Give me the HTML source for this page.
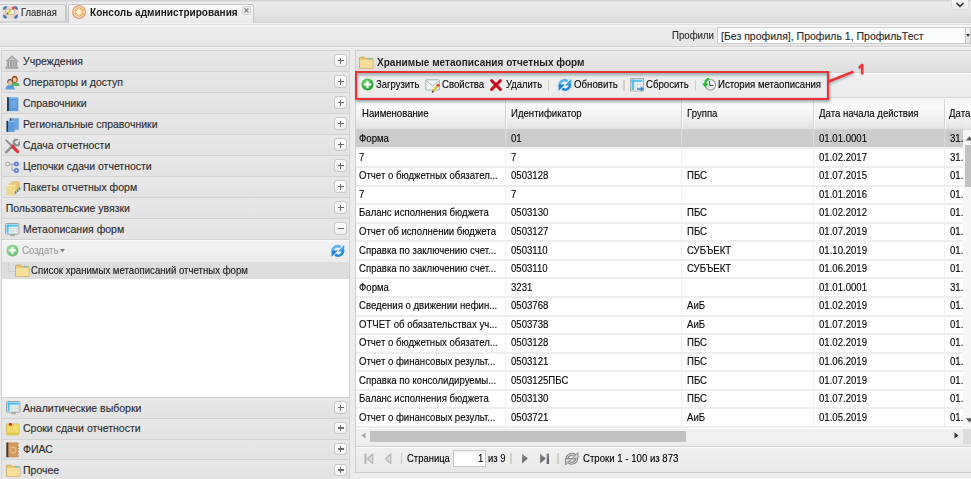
<!DOCTYPE html>
<html><head><meta charset="utf-8">
<style>
*{box-sizing:border-box}
html,body{margin:0;padding:0}
body{width:971px;height:479px;overflow:hidden;position:relative;background:#ececec;font-family:"Liberation Sans",sans-serif;color:#222}
.a{position:absolute}
.t{position:absolute;white-space:nowrap;line-height:1;transform-origin:0 0}
.s{-webkit-text-stroke:0.12px currentColor}
</style></head>
<body>
<div class="a" style="left:0px;top:0px;width:971px;height:2px;background:linear-gradient(#d2d2d2,#e2e2e2)"></div>
<div class="a" style="left:0px;top:2px;width:971px;height:20px;background:linear-gradient(#ededed,#e4e4e4 60%,#d9d9d9)"></div>
<div class="a" style="left:0px;top:22px;width:971px;height:1px;background:#d6d6d6"></div>
<div class="a" style="left:0px;top:23px;width:971px;height:1px;background:#f2f2f2"></div>
<div class="a" style="left:0px;top:24px;width:971px;height:1px;background:#dedede"></div>
<div class="a" style="left:0px;top:25px;width:971px;height:2px;background:#f5f5f5"></div>
<div class="a" style="left:-2px;top:4px;width:67.5px;height:18px;background:linear-gradient(#ececec,#e4e4e4);border:1px solid #c9c9c9;border-bottom:1px solid #d2d2d2;border-radius:3px 3px 0 0"></div>
<div class="a" style="left:66px;top:3px;width:1.2px;height:19px;background:#c8c8c8"></div>
<div class="a" style="left:68.3px;top:3.6px;width:185.7px;height:19.6px;background:linear-gradient(#fdfdfd,#f0f0f0 40%,#eaeaea);border:1px solid #c6c6c6;border-bottom:none;border-radius:3px 3px 0 0"></div>
<svg class="a" style="left:3px;top:6px" width="15" height="13" viewBox="0 0 15 13"><rect x="0.2" y="0.2" width="14.6" height="12.2" rx="2" fill="#f2d4c4"/><path d="M0.2 4 V2.2 Q0.2 0.2 2.2 0.2 H4 Q3.6 3.4 0.2 4 Z" fill="#3a78c4"/><path d="M14.8 4 V2.2 Q14.8 0.2 12.8 0.2 H11 Q11.4 3.4 14.8 4 Z" fill="#3a78c4"/><path d="M0.2 8.6 V10.4 Q0.2 12.4 2.2 12.4 H4 Q3.6 9.2 0.2 8.6 Z" fill="#3a78c4"/><path d="M14.8 8.6 V10.4 Q14.8 12.4 12.8 12.4 H11 Q11.4 9.2 14.8 8.6 Z" fill="#3a78c4"/><rect x="3" y="3.3" width="8.8" height="5.2" fill="#dff2f4" stroke="#b8a49a" stroke-width="0.7"/><path d="M4.4 7.6 L7.8 4.4" stroke="#e8d030" stroke-width="2.2"/><path d="M4 8.2 L4.8 7.2" stroke="#443" stroke-width="1.2"/><circle cx="10.2" cy="2" r="1.5" fill="#e85050"/></svg>
<div class="t s" style="left:21.2px;top:7.20px;font-size:10.5px;font-weight:400;color:#2a2a2a;transform:scaleX(0.895);">Главная</div>
<svg class="a" style="left:72.3px;top:5px" width="14" height="14" viewBox="0 0 14 14"><circle cx="7" cy="7" r="6.3" fill="#fff3e6" stroke="#e39a70" stroke-width="1.3"/><path d="M9.26 7.44 L11.88 7.45 A4.9 4.9 0 0 1 10.77 10.13 L8.91 8.28 Z" fill="#f7a848"/><path d="M8.28 8.91 L10.13 10.77 A4.9 4.9 0 0 1 7.45 11.88 L7.44 9.26 Z" fill="#f7a848"/><path d="M6.56 9.26 L6.55 11.88 A4.9 4.9 0 0 1 3.87 10.77 L5.72 8.91 Z" fill="#f7a848"/><path d="M5.09 8.28 L3.23 10.13 A4.9 4.9 0 0 1 2.12 7.45 L4.74 7.44 Z" fill="#f7a848"/><path d="M4.74 6.56 L2.12 6.55 A4.9 4.9 0 0 1 3.23 3.87 L5.09 5.72 Z" fill="#f7a848"/><path d="M5.72 5.09 L3.87 3.23 A4.9 4.9 0 0 1 6.55 2.12 L6.56 4.74 Z" fill="#f7a848"/><path d="M7.44 4.74 L7.45 2.12 A4.9 4.9 0 0 1 10.13 3.23 L8.28 5.09 Z" fill="#f7a848"/><path d="M8.91 5.72 L10.77 3.87 A4.9 4.9 0 0 1 11.88 6.55 L9.26 6.56 Z" fill="#f7a848"/></svg>
<div class="t " style="left:89.8px;top:7.00px;font-size:10.5px;font-weight:700;color:#1a1a1a;transform:scaleX(0.956);">Консоль администрирования</div>
<div class="a" style="left:242px;top:6px;width:9px;height:9px;background:#efefef;border:1px solid #d4d4d4;border-radius:2px"></div>
<svg class="a" style="left:242px;top:6px" width="9" height="9"><path d="M2.5 2.5 L6.5 6.5 M6.5 2.5 L2.5 6.5" stroke="#8a8a8a" stroke-width="1.4"/></svg>
<div class="a" style="left:951px;top:-3px;width:18px;height:13px;background:linear-gradient(#f6f6f6,#ececec);border:1px solid #dcdcdc;border-radius:3px"></div>
<svg class="a" style="left:955px;top:2px" width="10" height="6"><path d="M1.5 1 L5 4.3 L8.5 1" fill="none" stroke="#333" stroke-width="1.6"/></svg>
<div class="a" style="left:0px;top:27px;width:971px;height:19px;background:linear-gradient(#eaeaea,#e7e7e7)"></div>
<div class="a" style="left:0px;top:46px;width:971px;height:1px;background:#d0d0d0"></div>
<div class="a" style="left:0px;top:47px;width:971px;height:1px;background:#f4f4f4"></div>
<div class="a" style="left:0px;top:48px;width:971px;height:431px;background:#ececec"></div>
<div class="t s" style="left:671.9px;top:30.00px;font-size:10.5px;font-weight:400;color:#2a2a2a;transform:scaleX(0.917);">Профили</div>
<div class="a" style="left:717px;top:27px;width:249px;height:17px;background:linear-gradient(#f7f9fa,#ffffff);border:1px solid #cdcdcd"></div>
<div class="t s" style="left:721px;top:31.00px;font-size:10.5px;font-weight:400;color:#2a2a2a;">[Без профиля], Профиль 1, ПрофильТест</div>
<div class="a" style="left:965px;top:27px;width:6px;height:17px;background:linear-gradient(#f4f4f4,#e2e2e2);border:1px solid #c8c8c8"></div>
<svg class="a" style="left:966px;top:33px" width="5" height="5"><path d="M0 1 L4 1 L2 4 Z" fill="#333"/></svg>
<div class="a" style="left:1px;top:50px;width:349px;height:429px;background:#fff;border-left:1px solid #d4d4d4;border-right:1px solid #d4d4d4"></div>
<div class="a" style="left:1px;top:50px;width:349px;height:21px;background:linear-gradient(#e8e8e8,#e3e3e3);border-top:1px solid #d3d3d3;border-left:1px solid #d4d4d4;border-right:1px solid #d4d4d4"></div>
<svg class="a" style="left:5px;top:55px" width="15" height="15" viewBox="0 0 15 15"><path d="M7 0.2 L13.4 6 H0.6 Z" fill="#a4a4a4"/><path d="M7 2.2 L10.6 5 H3.4 Z" fill="#c4c4c4"/><rect x="0.8" y="5.8" width="12.4" height="1.2" fill="#b0b0b0"/><rect x="1.6" y="7" width="10.8" height="4.6" fill="#cfcfcf"/><rect x="2.2" y="7" width="1.8" height="4.6" fill="#9c9c9c"/><rect x="5" y="7" width="1.8" height="4.6" fill="#9c9c9c"/><rect x="7.6" y="7" width="1.8" height="4.6" fill="#9c9c9c"/><rect x="10.2" y="7" width="1.8" height="4.6" fill="#9c9c9c"/><rect x="0.6" y="11.4" width="12.8" height="2.4" rx="0.6" fill="#a0a0a0"/></svg>
<div class="t s" style="left:23px;top:56.00px;font-size:10.5px;font-weight:400;color:#2a2a2a;">Учреждения</div>
<div class="a" style="left:334.3px;top:54.2px;width:12.5px;height:12.5px;background:linear-gradient(#fdfdfd,#f0f0f0);border:1px solid #c8c8c8;border-radius:3px"></div>
<div class="a" style="left:337.6px;top:59.5px;width:6px;height:1.9px;background:#6a6a6a"></div>
<div class="a" style="left:339.6px;top:57.5px;width:1.9px;height:6px;background:#6a6a6a"></div>
<div class="a" style="left:1px;top:71px;width:349px;height:21px;background:linear-gradient(#e8e8e8,#e3e3e3);border-top:1px solid #d3d3d3;border-left:1px solid #d4d4d4;border-right:1px solid #d4d4d4"></div>
<svg class="a" style="left:4.5px;top:74.5px" width="16" height="15" viewBox="0 0 16 15"><path d="M6.5 11 Q6.5 7.6 10.6 7.6 Q14.6 7.6 14.6 11 Z" fill="#52b868"/><ellipse cx="9.7" cy="4.3" rx="3" ry="3.6" fill="#a84a22"/><ellipse cx="9.7" cy="4.8" rx="1.9" ry="2.4" fill="#f4c898"/><path d="M0.5 14.6 Q0.5 10 5 10 Q9.6 10 9.6 14.6 Z" fill="#5a9ad8"/><circle cx="5.1" cy="6.8" r="2.8" fill="#5a4a40"/><ellipse cx="5.1" cy="7.6" rx="2" ry="2.3" fill="#f2c896"/></svg>
<div class="t s" style="left:23px;top:77.00px;font-size:10.5px;font-weight:400;color:#2a2a2a;">Операторы и доступ</div>
<div class="a" style="left:334.3px;top:75.2px;width:12.5px;height:12.5px;background:linear-gradient(#fdfdfd,#f0f0f0);border:1px solid #c8c8c8;border-radius:3px"></div>
<div class="a" style="left:337.6px;top:80.5px;width:6px;height:1.9px;background:#6a6a6a"></div>
<div class="a" style="left:339.6px;top:78.5px;width:1.9px;height:6px;background:#6a6a6a"></div>
<div class="a" style="left:1px;top:92px;width:349px;height:21px;background:linear-gradient(#e8e8e8,#e3e3e3);border-top:1px solid #d3d3d3;border-left:1px solid #d4d4d4;border-right:1px solid #d4d4d4"></div>
<svg class="a" style="left:7px;top:96.5px" width="12" height="15" viewBox="0 0 12 15"><rect x="0.3" y="0.3" width="11" height="13.8" fill="#5a98dc"/><rect x="0" y="0.3" width="1.9" height="13.8" fill="#2a3a4a"/><rect x="3.4" y="3.2" width="6.4" height="7.6" fill="#6aa6e4"/><rect x="1.9" y="0.3" width="9.4" height="1.2" fill="#8cc0ec"/></svg>
<div class="t s" style="left:23px;top:98.00px;font-size:10.5px;font-weight:400;color:#2a2a2a;">Справочники</div>
<div class="a" style="left:334.3px;top:96.2px;width:12.5px;height:12.5px;background:linear-gradient(#fdfdfd,#f0f0f0);border:1px solid #c8c8c8;border-radius:3px"></div>
<div class="a" style="left:337.6px;top:101.5px;width:6px;height:1.9px;background:#6a6a6a"></div>
<div class="a" style="left:339.6px;top:99.5px;width:1.9px;height:6px;background:#6a6a6a"></div>
<div class="a" style="left:1px;top:113px;width:349px;height:21px;background:linear-gradient(#e8e8e8,#e3e3e3);border-top:1px solid #d3d3d3;border-left:1px solid #d4d4d4;border-right:1px solid #d4d4d4"></div>
<svg class="a" style="left:6px;top:117.8px" width="14" height="15" viewBox="0 0 14 15"><rect x="4.2" y="0.2" width="8.6" height="11.6" fill="#6aa6e4"/><rect x="3.7" y="0.2" width="1.6" height="11.6" fill="#34485c"/><rect x="1.3" y="2.9" width="7.2" height="11" fill="#5a9ade"/><rect x="0.4" y="2.9" width="1.7" height="11" fill="#2a3a4a"/><rect x="2" y="2.9" width="6.5" height="1.2" fill="#8cc0ec"/></svg>
<div class="t s" style="left:23px;top:119.00px;font-size:10.5px;font-weight:400;color:#2a2a2a;">Региональные справочники</div>
<div class="a" style="left:334.3px;top:117.2px;width:12.5px;height:12.5px;background:linear-gradient(#fdfdfd,#f0f0f0);border:1px solid #c8c8c8;border-radius:3px"></div>
<div class="a" style="left:337.6px;top:122.5px;width:6px;height:1.9px;background:#6a6a6a"></div>
<div class="a" style="left:339.6px;top:120.5px;width:1.9px;height:6px;background:#6a6a6a"></div>
<div class="a" style="left:1px;top:134px;width:349px;height:21px;background:linear-gradient(#e8e8e8,#e3e3e3);border-top:1px solid #d3d3d3;border-left:1px solid #d4d4d4;border-right:1px solid #d4d4d4"></div>
<svg class="a" style="left:4.5px;top:138.5px" width="15" height="15" viewBox="0 0 15 15"><path d="M1.2 13.3 L9.6 4.9" stroke="#8e8e8e" stroke-width="2.4" stroke-linecap="round"/><circle cx="11.6" cy="3.6" r="2.9" fill="none" stroke="#8e8e8e" stroke-width="2.2"/><path d="M11.6 3.6 L14.5 0.7" stroke="#ececec" stroke-width="2"/><path d="M1.2 1.3 L7 7" stroke="#8e8e8e" stroke-width="1.8" stroke-linecap="round"/><path d="M7.6 7.6 L12.6 12.6" stroke="#e2343c" stroke-width="3.2" stroke-linecap="round"/></svg>
<div class="t s" style="left:23px;top:140.00px;font-size:10.5px;font-weight:400;color:#2a2a2a;">Сдача отчетности</div>
<div class="a" style="left:334.3px;top:138.2px;width:12.5px;height:12.5px;background:linear-gradient(#fdfdfd,#f0f0f0);border:1px solid #c8c8c8;border-radius:3px"></div>
<div class="a" style="left:337.6px;top:143.5px;width:6px;height:1.9px;background:#6a6a6a"></div>
<div class="a" style="left:339.6px;top:141.5px;width:1.9px;height:6px;background:#6a6a6a"></div>
<div class="a" style="left:1px;top:155px;width:349px;height:21px;background:linear-gradient(#e8e8e8,#e3e3e3);border-top:1px solid #d3d3d3;border-left:1px solid #d4d4d4;border-right:1px solid #d4d4d4"></div>
<svg class="a" style="left:5px;top:160px" width="15" height="15" viewBox="0 0 15 15"><path d="M4.6 4.1 H9.6 M7 4.1 V10.4 H9.6" fill="none" stroke="#a8a8a8" stroke-width="1.1"/><circle cx="2.6" cy="4.1" r="1.9" fill="#f4f4f4" stroke="#a0a0a0" stroke-width="1.1"/><circle cx="11.4" cy="4.1" r="2.5" fill="#5a7ee0"/><circle cx="11.4" cy="10.4" r="2.5" fill="#5a7ee0"/><circle cx="11.4" cy="4.1" r="0.8" fill="#dfe8ff"/><circle cx="11.4" cy="10.4" r="0.8" fill="#dfe8ff"/></svg>
<div class="t s" style="left:23px;top:161.00px;font-size:10.5px;font-weight:400;color:#2a2a2a;">Цепочки сдачи отчетности</div>
<div class="a" style="left:334.3px;top:159.2px;width:12.5px;height:12.5px;background:linear-gradient(#fdfdfd,#f0f0f0);border:1px solid #c8c8c8;border-radius:3px"></div>
<div class="a" style="left:337.6px;top:164.5px;width:6px;height:1.9px;background:#6a6a6a"></div>
<div class="a" style="left:339.6px;top:162.5px;width:1.9px;height:6px;background:#6a6a6a"></div>
<div class="a" style="left:1px;top:176px;width:349px;height:21px;background:linear-gradient(#e8e8e8,#e3e3e3);border-top:1px solid #d3d3d3;border-left:1px solid #d4d4d4;border-right:1px solid #d4d4d4"></div>
<svg class="a" style="left:5.5px;top:181px" width="15" height="15" viewBox="0 0 15 15"><rect x="5" y="0.3" width="8.6" height="9.6" rx="0.8" fill="#e4c46c"/><rect x="2.8" y="2.2" width="8.6" height="10" rx="0.8" fill="#eccc76"/><rect x="0.6" y="4.2" width="8.6" height="10" rx="0.8" fill="#f2d88c"/><rect x="0.6" y="4.2" width="8.6" height="1.2" fill="#f8e6ac"/><ellipse cx="9.6" cy="11.6" rx="0.9" ry="1.5" fill="#2aa0a8"/><ellipse cx="11.7" cy="9.6" rx="0.9" ry="1.5" fill="#2aa0a8"/><ellipse cx="13.6" cy="7.6" rx="0.9" ry="1.5" fill="#2aa0a8"/></svg>
<div class="t s" style="left:23px;top:182.00px;font-size:10.5px;font-weight:400;color:#2a2a2a;">Пакеты отчетных форм</div>
<div class="a" style="left:334.3px;top:180.2px;width:12.5px;height:12.5px;background:linear-gradient(#fdfdfd,#f0f0f0);border:1px solid #c8c8c8;border-radius:3px"></div>
<div class="a" style="left:337.6px;top:185.5px;width:6px;height:1.9px;background:#6a6a6a"></div>
<div class="a" style="left:339.6px;top:183.5px;width:1.9px;height:6px;background:#6a6a6a"></div>
<div class="a" style="left:1px;top:197px;width:349px;height:21px;background:linear-gradient(#e8e8e8,#e3e3e3);border-top:1px solid #d3d3d3;border-left:1px solid #d4d4d4;border-right:1px solid #d4d4d4"></div>
<div class="t s" style="left:5.7px;top:203.00px;font-size:10.5px;font-weight:400;color:#2a2a2a;">Пользовательские увязки</div>
<div class="a" style="left:334.3px;top:201.2px;width:12.5px;height:12.5px;background:linear-gradient(#fdfdfd,#f0f0f0);border:1px solid #c8c8c8;border-radius:3px"></div>
<div class="a" style="left:337.6px;top:206.5px;width:6px;height:1.9px;background:#6a6a6a"></div>
<div class="a" style="left:339.6px;top:204.5px;width:1.9px;height:6px;background:#6a6a6a"></div>
<div class="a" style="left:1px;top:218px;width:349px;height:21px;background:linear-gradient(#e8e8e8,#e3e3e3);border-top:1px solid #d3d3d3;border-left:1px solid #d4d4d4;border-right:1px solid #d4d4d4"></div>
<svg class="a" style="left:5px;top:222.5px" width="15" height="14" viewBox="0 0 15 14"><rect x="0.5" y="0.5" width="13.4" height="10.6" rx="0.8" fill="#eef4f4" stroke="#98a4a4" stroke-width="1"/><path d="M6 3.6 V10.4 M9 3.6 V10.4 M12 3.6 V10.4 M3.4 5.6 H13.4 M3.4 7.8 H13.4" stroke="#cdd6d6" stroke-width="0.7"/><rect x="1.6" y="1.6" width="11.4" height="2" fill="#44c0f8"/><rect x="1.6" y="1.6" width="2" height="8.6" fill="#44c0f8"/><rect x="5" y="11" width="5" height="2.2" fill="#a4acac"/></svg>
<div class="t s" style="left:23px;top:224.00px;font-size:10.5px;font-weight:400;color:#2a2a2a;">Метаописания форм</div>
<div class="a" style="left:334.3px;top:222.2px;width:12.5px;height:12.5px;background:linear-gradient(#fdfdfd,#f0f0f0);border:1px solid #c8c8c8;border-radius:3px"></div>
<div class="a" style="left:337.6px;top:227.5px;width:6px;height:1.9px;background:#6a6a6a"></div>
<div class="a" style="left:1px;top:397px;width:349px;height:21px;background:linear-gradient(#e8e8e8,#e3e3e3);border-top:1px solid #d3d3d3;border-left:1px solid #d4d4d4;border-right:1px solid #d4d4d4"></div>
<svg class="a" style="left:5.5px;top:401.3px" width="15" height="14" viewBox="0 0 15 14"><rect x="0.5" y="0.5" width="13.4" height="10.6" rx="0.8" fill="#eef4f4" stroke="#98a4a4" stroke-width="1"/><path d="M6 3.6 V10.4 M9 3.6 V10.4 M12 3.6 V10.4 M3.4 5.6 H13.4 M3.4 7.8 H13.4" stroke="#cdd6d6" stroke-width="0.7"/><rect x="1.6" y="1.6" width="11.4" height="2" fill="#44c0f8"/><rect x="1.6" y="1.6" width="2" height="8.6" fill="#44c0f8"/><rect x="5" y="11" width="5" height="2.2" fill="#a4acac"/></svg>
<div class="t s" style="left:23px;top:402.50px;font-size:10.5px;font-weight:400;color:#2a2a2a;">Аналитические выборки</div>
<div class="a" style="left:334.3px;top:401.2px;width:12.5px;height:12.5px;background:linear-gradient(#fdfdfd,#f0f0f0);border:1px solid #c8c8c8;border-radius:3px"></div>
<div class="a" style="left:337.6px;top:406.5px;width:6px;height:1.9px;background:#6a6a6a"></div>
<div class="a" style="left:339.6px;top:404.5px;width:1.9px;height:6px;background:#6a6a6a"></div>
<div class="a" style="left:1px;top:417.6px;width:349px;height:21px;background:linear-gradient(#e8e8e8,#e3e3e3);border-top:1px solid #d3d3d3;border-left:1px solid #d4d4d4;border-right:1px solid #d4d4d4"></div>
<svg class="a" style="left:6px;top:423px" width="14" height="13" viewBox="0 0 14 13"><rect x="0.5" y="1" width="12.6" height="11" rx="0.8" fill="#f0dc6c" stroke="#d0ba48" stroke-width="0.8"/><rect x="1" y="9.6" width="11.6" height="2" fill="#dcc452"/><path d="M4.4 1.2 L6.6 3.4" stroke="#888" stroke-width="0.8"/><circle cx="4.4" cy="1.3" r="1.5" fill="#e41c2c"/></svg>
<div class="t s" style="left:23px;top:423.10px;font-size:10.5px;font-weight:400;color:#2a2a2a;">Сроки сдачи отчетности</div>
<div class="a" style="left:334.3px;top:421.8px;width:12.5px;height:12.5px;background:linear-gradient(#fdfdfd,#f0f0f0);border:1px solid #c8c8c8;border-radius:3px"></div>
<div class="a" style="left:337.6px;top:427.1px;width:6px;height:1.9px;background:#6a6a6a"></div>
<div class="a" style="left:339.6px;top:425.1px;width:1.9px;height:6px;background:#6a6a6a"></div>
<div class="a" style="left:1px;top:438.7px;width:349px;height:21px;background:linear-gradient(#e8e8e8,#e3e3e3);border-top:1px solid #d3d3d3;border-left:1px solid #d4d4d4;border-right:1px solid #d4d4d4"></div>
<svg class="a" style="left:5.6px;top:442px" width="14" height="16" viewBox="0 0 14 16"><rect x="0.4" y="0.6" width="12.4" height="14.6" rx="1" fill="#c88a50"/><rect x="0.4" y="0.6" width="2" height="14.6" fill="#3a3a3a"/><rect x="2.6" y="1.6" width="9" height="12.6" fill="#d49a60"/><circle cx="7" cy="8" r="2.8" fill="none" stroke="#e8bc88" stroke-width="1.2"/><circle cx="12.6" cy="3.5" r="0.7" fill="#eee"/><circle cx="12.6" cy="6.5" r="0.7" fill="#eee"/><circle cx="12.6" cy="9.5" r="0.7" fill="#eee"/><circle cx="12.6" cy="12.5" r="0.7" fill="#eee"/></svg>
<div class="t s" style="left:23px;top:444.20px;font-size:10.5px;font-weight:400;color:#2a2a2a;">ФИАС</div>
<div class="a" style="left:334.3px;top:442.9px;width:12.5px;height:12.5px;background:linear-gradient(#fdfdfd,#f0f0f0);border:1px solid #c8c8c8;border-radius:3px"></div>
<div class="a" style="left:337.6px;top:448.2px;width:6px;height:1.9px;background:#6a6a6a"></div>
<div class="a" style="left:339.6px;top:446.2px;width:1.9px;height:6px;background:#6a6a6a"></div>
<div class="a" style="left:1px;top:459.4px;width:349px;height:21px;background:linear-gradient(#e8e8e8,#e3e3e3);border-top:1px solid #d3d3d3;border-left:1px solid #d4d4d4;border-right:1px solid #d4d4d4"></div>
<svg class="a" style="left:5.5px;top:464px" width="15" height="13" viewBox="0 0 15 13"><path d="M0.5 2 Q0.5 1.1 1.4 1.1 H5 L6.4 2.4 H13.2 Q14 2.4 14 3.2 V12.2 H0.5 Z" fill="#e8c676" stroke="#caa452" stroke-width="0.8"/><rect x="0.9" y="4" width="12.8" height="8" fill="#f6de9c"/><rect x="9.4" y="2" width="3.6" height="1.6" fill="#6ccccc"/></svg>
<div class="t s" style="left:23px;top:464.90px;font-size:10.5px;font-weight:400;color:#2a2a2a;">Прочее</div>
<div class="a" style="left:334.3px;top:463.59999999999997px;width:12.5px;height:12.5px;background:linear-gradient(#fdfdfd,#f0f0f0);border:1px solid #c8c8c8;border-radius:3px"></div>
<div class="a" style="left:337.6px;top:468.9px;width:6px;height:1.9px;background:#6a6a6a"></div>
<div class="a" style="left:339.6px;top:466.9px;width:1.9px;height:6px;background:#6a6a6a"></div>
<div class="a" style="left:2px;top:239px;width:347px;height:23px;background:linear-gradient(#f3f3f3,#ececec);border-top:1px solid #d4d4d4"></div>
<div class="a" style="left:2px;top:240px;width:347px;height:1px;background:#fafafa"></div>
<div class="a" style="left:0;top:0;opacity:0.62">
<svg class="a" style="left:6.2px;top:243.8px" width="13" height="13" viewBox="0 0 13 13"><defs><radialGradient id="gA" cx="40%" cy="35%" r="70%"><stop offset="0" stop-color="#6fe06f"/><stop offset="1" stop-color="#139a1f"/></radialGradient></defs><circle cx="6.5" cy="6.5" r="6" fill="url(#gA)"/><rect x="2.8" y="5.4" width="7.4" height="2.2" fill="#fff"/><rect x="5.4" y="2.8" width="2.2" height="7.4" fill="#fff"/></svg>
</div>
<div class="t s" style="left:21.6px;top:245.00px;font-size:10.5px;font-weight:400;color:#9a9a9a;transform:scaleX(0.912);">Создать</div>
<svg class="a" style="left:60px;top:249px" width="6" height="4"><path d="M0 0 L5 0 L2.5 3 Z" fill="#777"/></svg>
<svg class="a" style="left:331px;top:244px" width="14" height="14" viewBox="0 0 14 14"><path d="M1.6 7.6 A5 5 0 0 1 9.6 3.2" fill="none" stroke="#58b4f0" stroke-width="2.5"/><path d="M13.2 1 V7.4 H6.8 Z" fill="#3aa0ec"/><path d="M12 6.2 A5 5 0 0 1 4 10.6" fill="none" stroke="#2088e2" stroke-width="2.5"/><path d="M0.6 12.8 V6.6 H6.8 Z" fill="#1a7edc"/></svg>
<div class="a" style="left:2px;top:262px;width:347px;height:17px;background:#dddddd"></div>
<svg class="a" style="left:8px;top:262px" width="10" height="12"><path d="M0.5 0 V9.5 H8" fill="none" stroke="#cfcfcf" stroke-width="1"/></svg>
<svg class="a" style="left:15.2px;top:264.2px" width="15" height="13" viewBox="0 0 15 13"><path d="M0.5 2 Q0.5 1.1 1.4 1.1 H5 L6.4 2.4 H13.2 Q14 2.4 14 3.2 V12.2 H0.5 Z" fill="#e8c676" stroke="#caa452" stroke-width="0.8"/><rect x="0.9" y="4" width="12.8" height="8" fill="#f6de9c"/><rect x="9.4" y="2" width="3.6" height="1.6" fill="#6ccccc"/></svg>
<div class="t s" style="left:30.9px;top:265.00px;font-size:10.5px;font-weight:400;color:#1a1a1a;transform:scaleX(0.916);">Список хранимых метаописаний отчетных форм</div>
<div class="a" style="left:355px;top:50px;width:616px;height:423px;background:#fff;border:1px solid #cdcdcd;border-right:none"></div>
<div class="a" style="left:356px;top:51px;width:615px;height:21px;background:linear-gradient(#ececec,#dedede)"></div>
<svg class="a" style="left:359px;top:56px" width="15" height="13" viewBox="0 0 15 13"><path d="M0.5 2 Q0.5 1.1 1.4 1.1 H5 L6.4 2.4 H13.2 Q14 2.4 14 3.2 V12.2 H0.5 Z" fill="#e8c676" stroke="#caa452" stroke-width="0.8"/><rect x="0.9" y="4" width="12.8" height="8" fill="#f6de9c"/><rect x="9.4" y="2" width="3.6" height="1.6" fill="#6ccccc"/></svg>
<div class="t " style="left:377.4px;top:57.00px;font-size:10.5px;font-weight:700;color:#1e1e1e;transform:scaleX(0.958);">Хранимые метаописания отчетных форм</div>
<div class="a" style="left:356px;top:72px;width:615px;height:1px;background:#d2d2d2"></div>
<div class="a" style="left:356px;top:73px;width:615px;height:25px;background:linear-gradient(#fafafa 0,#fafafa 1px,#efefef 2px,#eeeeee 60%,#ebebeb);border-bottom:1px solid #d8d8d8"></div>
<svg class="a" style="left:361px;top:78px" width="13" height="13" viewBox="0 0 13 13"><defs><radialGradient id="gA" cx="40%" cy="35%" r="70%"><stop offset="0" stop-color="#6fe06f"/><stop offset="1" stop-color="#139a1f"/></radialGradient></defs><circle cx="6.5" cy="6.5" r="6" fill="url(#gA)"/><rect x="2.8" y="5.4" width="7.4" height="2.2" fill="#fff"/><rect x="5.4" y="2.8" width="2.2" height="7.4" fill="#fff"/></svg>
<div class="t s" style="left:376.4px;top:78.60px;font-size:10.5px;font-weight:400;color:#000;transform:scaleX(0.904);">Загрузить</div>
<svg class="a" style="left:425px;top:79px" width="16" height="14" viewBox="0 0 16 14"><rect x="0.8" y="0.8" width="13.6" height="10.2" rx="1" fill="#f0f6f6" stroke="#a8b8b8" stroke-width="1.1"/><path d="M1.4 1.6 L7.6 7 L13.8 1.6" fill="none" stroke="#a8b8b8" stroke-width="1"/><path d="M7.6 12.6 L12.6 6.8" stroke="#e6c832" stroke-width="2.4"/><path d="M7.2 13.4 L8.3 12" stroke="#333" stroke-width="1.5"/><circle cx="13" cy="6.2" r="1.5" fill="#e83a3a"/></svg>
<div class="t s" style="left:441.5px;top:78.60px;font-size:10.5px;font-weight:400;color:#000;transform:scaleX(0.915);">Свойства</div>
<svg class="a" style="left:490.2px;top:78.6px" width="12" height="12" viewBox="0 0 12 12"><path d="M1.6 1.6 L10.4 10.4 M10.4 1.6 L1.6 10.4" stroke="#c8101a" stroke-width="2.9" stroke-linecap="round"/></svg>
<div class="t s" style="left:505.6px;top:78.60px;font-size:10.5px;font-weight:400;color:#000;transform:scaleX(0.9);">Удалить</div>
<div class="a" style="left:547.5px;top:79.5px;width:1px;height:11px;background:#d2cdc6;width:1.8px"></div>
<svg class="a" style="left:558px;top:77.5px" width="14" height="14" viewBox="0 0 14 14"><path d="M1.6 7.6 A5 5 0 0 1 9.6 3.2" fill="none" stroke="#58b4f0" stroke-width="2.5"/><path d="M13.2 1 V7.4 H6.8 Z" fill="#3aa0ec"/><path d="M12 6.2 A5 5 0 0 1 4 10.6" fill="none" stroke="#2088e2" stroke-width="2.5"/><path d="M0.6 12.8 V6.6 H6.8 Z" fill="#1a7edc"/></svg>
<div class="t s" style="left:573.8px;top:78.60px;font-size:10.5px;font-weight:400;color:#000;transform:scaleX(0.924);">Обновить</div>
<div class="a" style="left:623px;top:79.5px;width:1px;height:11px;background:#d2cdc6;width:1.8px"></div>
<svg class="a" style="left:629.5px;top:77.5px" width="15" height="14" viewBox="0 0 15 14"><rect x="0.5" y="0.5" width="13" height="12.5" fill="#eef2f2" stroke="#a8b4b4" stroke-width="1"/><path d="M4.6 4.3 V12.5 M7.6 4.3 V12.5 M10.6 4.3 V12.5 M3.5 6.8 H13 M3.5 9.3 H13" stroke="#d4dcdc" stroke-width="0.8"/><rect x="1.5" y="1.6" width="11" height="2.3" fill="#54c4f6"/><rect x="1.5" y="1.6" width="2.4" height="10.4" fill="#54c4f6"/><path d="M7 10.2 H10.8 V8.2 L14 10.9 L10.8 13.6 V11.7 H7 Z" fill="#2a7fd4"/></svg>
<div class="t s" style="left:646.4px;top:78.60px;font-size:10.5px;font-weight:400;color:#000;transform:scaleX(0.917);">Сбросить</div>
<div class="a" style="left:694.5px;top:79.5px;width:1px;height:11px;background:#d2cdc6;width:1.8px"></div>
<svg class="a" style="left:701px;top:78px" width="16" height="14" viewBox="0 0 16 14"><circle cx="9.4" cy="6.9" r="5.2" fill="#f2f6f6" stroke="#a4a8a8" stroke-width="1.3"/><path d="M8.6 3.2 V7.4 H12.4" fill="none" stroke="#4a4a4a" stroke-width="1"/><path d="M8.2 0.8 Q4.2 1.4 4.3 5.6" fill="none" stroke="#22c030" stroke-width="2.2"/><path d="M1 5.4 H7.6 L4.3 9.4 Z" fill="#18b828"/></svg>
<div class="t s" style="left:718px;top:78.60px;font-size:10.5px;font-weight:400;color:#000;transform:scaleX(0.914);">История метаописания</div>
<div class="a" style="left:356px;top:98px;width:607px;height:32px;background:linear-gradient(#f4f4f4 0,#fafafa 30%,#f0f0f0 65%,#e6e6e6 92%,#dedede);border-bottom:1px solid #d2d2d2"></div>
<div class="a" style="left:963px;top:98px;width:8px;height:32px;background:linear-gradient(#f4f4f4 0,#fafafa 30%,#f0f0f0 65%,#e6e6e6 92%,#dedede)"></div>
<div class="a" style="left:505px;top:99px;width:1px;height:30px;background:#d6d6d6"></div>
<div class="a" style="left:506px;top:99px;width:1px;height:30px;background:#fafafa"></div>
<div class="a" style="left:681px;top:99px;width:1px;height:30px;background:#d6d6d6"></div>
<div class="a" style="left:682px;top:99px;width:1px;height:30px;background:#fafafa"></div>
<div class="a" style="left:813px;top:99px;width:1px;height:30px;background:#d6d6d6"></div>
<div class="a" style="left:814px;top:99px;width:1px;height:30px;background:#fafafa"></div>
<div class="a" style="left:944px;top:99px;width:1px;height:30px;background:#d6d6d6"></div>
<div class="a" style="left:945px;top:99px;width:1px;height:30px;background:#fafafa"></div>
<div class="t s" style="left:362px;top:107.90px;font-size:10.5px;font-weight:400;color:#000;transform:scaleX(0.914);">Наименование</div>
<div class="t s" style="left:511.4px;top:107.90px;font-size:10.5px;font-weight:400;color:#000;transform:scaleX(0.914);">Идентификатор</div>
<div class="t s" style="left:687px;top:107.90px;font-size:10.5px;font-weight:400;color:#000;transform:scaleX(0.914);">Группа</div>
<div class="t s" style="left:818.6px;top:107.90px;font-size:10.5px;font-weight:400;color:#000;transform:scaleX(0.914);">Дата начала действия</div>
<div class="t s" style="left:949px;top:107.90px;font-size:10.5px;font-weight:400;color:#000;transform:scaleX(0.914);">Дата окончания</div>
<div class="a" style="left:356px;top:130px;width:607px;height:298px">
<div class="a" style="left:0px;top:-0.1px;width:607px;height:18.569999999999993px;background:#cccccc"></div>
<div class="a" style="left:149px;top:-0.1px;width:1px;height:18.569999999999993px;background:#dcdcdc"></div>
<div class="a" style="left:325px;top:-0.1px;width:1px;height:18.569999999999993px;background:#dcdcdc"></div>
<div class="a" style="left:457px;top:-0.1px;width:1px;height:18.569999999999993px;background:#dcdcdc"></div>
<div class="a" style="left:588px;top:-0.1px;width:1px;height:18.569999999999993px;background:#dcdcdc"></div>
<div class="a" style="left:0px;top:17.47px;width:607px;height:2px;background:#eeeeee"></div>
<div class="t s" style="left:3.3999999999999773px;top:3.10px;font-size:10.5px;font-weight:400;color:#000;transform:scaleX(0.914);">Форма</div>
<div class="t s" style="left:155px;top:3.10px;font-size:10.5px;font-weight:400;color:#000;transform:scaleX(0.914);">01</div>
<div class="t s" style="left:462.79999999999995px;top:3.10px;font-size:10.5px;font-weight:400;color:#000;transform:scaleX(0.914);">01.01.0001</div>
<div class="t s" style="left:594px;top:3.10px;font-size:10.5px;font-weight:400;color:#000;transform:scaleX(0.914);">31.</div>
<div class="a" style="left:149px;top:18.47px;width:1px;height:18.569999999999993px;background:#f0f0f0"></div>
<div class="a" style="left:325px;top:18.47px;width:1px;height:18.569999999999993px;background:#f0f0f0"></div>
<div class="a" style="left:457px;top:18.47px;width:1px;height:18.569999999999993px;background:#f0f0f0"></div>
<div class="a" style="left:588px;top:18.47px;width:1px;height:18.569999999999993px;background:#f0f0f0"></div>
<div class="a" style="left:0px;top:36.04px;width:607px;height:2px;background:#eeeeee"></div>
<div class="t s" style="left:3.3999999999999773px;top:21.67px;font-size:10.5px;font-weight:400;color:#000;transform:scaleX(0.914);">7</div>
<div class="t s" style="left:155px;top:21.67px;font-size:10.5px;font-weight:400;color:#000;transform:scaleX(0.914);">7</div>
<div class="t s" style="left:462.79999999999995px;top:21.67px;font-size:10.5px;font-weight:400;color:#000;transform:scaleX(0.914);">01.02.2017</div>
<div class="t s" style="left:594px;top:21.67px;font-size:10.5px;font-weight:400;color:#000;transform:scaleX(0.914);">31.</div>
<div class="a" style="left:149px;top:37.04px;width:1px;height:18.57000000000002px;background:#f0f0f0"></div>
<div class="a" style="left:325px;top:37.04px;width:1px;height:18.57000000000002px;background:#f0f0f0"></div>
<div class="a" style="left:457px;top:37.04px;width:1px;height:18.57000000000002px;background:#f0f0f0"></div>
<div class="a" style="left:588px;top:37.04px;width:1px;height:18.57000000000002px;background:#f0f0f0"></div>
<div class="a" style="left:0px;top:54.61px;width:607px;height:2px;background:#eeeeee"></div>
<div class="t s" style="left:3.3999999999999773px;top:40.24px;font-size:10.5px;font-weight:400;color:#000;transform:scaleX(0.914);">Отчет о бюджетных обязател...</div>
<div class="t s" style="left:155px;top:40.24px;font-size:10.5px;font-weight:400;color:#000;transform:scaleX(0.914);">0503128</div>
<div class="t s" style="left:331px;top:40.24px;font-size:10.5px;font-weight:400;color:#000;transform:scaleX(0.914);">ПБС</div>
<div class="t s" style="left:462.79999999999995px;top:40.24px;font-size:10.5px;font-weight:400;color:#000;transform:scaleX(0.914);">01.07.2015</div>
<div class="t s" style="left:594px;top:40.24px;font-size:10.5px;font-weight:400;color:#000;transform:scaleX(0.914);">01.</div>
<div class="a" style="left:149px;top:55.61px;width:1px;height:18.569999999999993px;background:#f0f0f0"></div>
<div class="a" style="left:325px;top:55.61px;width:1px;height:18.569999999999993px;background:#f0f0f0"></div>
<div class="a" style="left:457px;top:55.61px;width:1px;height:18.569999999999993px;background:#f0f0f0"></div>
<div class="a" style="left:588px;top:55.61px;width:1px;height:18.569999999999993px;background:#f0f0f0"></div>
<div class="a" style="left:0px;top:73.18px;width:607px;height:2px;background:#eeeeee"></div>
<div class="t s" style="left:3.3999999999999773px;top:58.81px;font-size:10.5px;font-weight:400;color:#000;transform:scaleX(0.914);">7</div>
<div class="t s" style="left:155px;top:58.81px;font-size:10.5px;font-weight:400;color:#000;transform:scaleX(0.914);">7</div>
<div class="t s" style="left:462.79999999999995px;top:58.81px;font-size:10.5px;font-weight:400;color:#000;transform:scaleX(0.914);">01.01.2016</div>
<div class="t s" style="left:594px;top:58.81px;font-size:10.5px;font-weight:400;color:#000;transform:scaleX(0.914);">01.</div>
<div class="a" style="left:149px;top:74.18px;width:1px;height:18.569999999999993px;background:#f0f0f0"></div>
<div class="a" style="left:325px;top:74.18px;width:1px;height:18.569999999999993px;background:#f0f0f0"></div>
<div class="a" style="left:457px;top:74.18px;width:1px;height:18.569999999999993px;background:#f0f0f0"></div>
<div class="a" style="left:588px;top:74.18px;width:1px;height:18.569999999999993px;background:#f0f0f0"></div>
<div class="a" style="left:0px;top:91.75px;width:607px;height:2px;background:#eeeeee"></div>
<div class="t s" style="left:3.3999999999999773px;top:77.38px;font-size:10.5px;font-weight:400;color:#000;transform:scaleX(0.914);">Баланс исполнения бюджета</div>
<div class="t s" style="left:155px;top:77.38px;font-size:10.5px;font-weight:400;color:#000;transform:scaleX(0.914);">0503130</div>
<div class="t s" style="left:331px;top:77.38px;font-size:10.5px;font-weight:400;color:#000;transform:scaleX(0.914);">ПБС</div>
<div class="t s" style="left:462.79999999999995px;top:77.38px;font-size:10.5px;font-weight:400;color:#000;transform:scaleX(0.914);">01.02.2012</div>
<div class="t s" style="left:594px;top:77.38px;font-size:10.5px;font-weight:400;color:#000;transform:scaleX(0.914);">01.</div>
<div class="a" style="left:149px;top:92.75px;width:1px;height:18.569999999999993px;background:#f0f0f0"></div>
<div class="a" style="left:325px;top:92.75px;width:1px;height:18.569999999999993px;background:#f0f0f0"></div>
<div class="a" style="left:457px;top:92.75px;width:1px;height:18.569999999999993px;background:#f0f0f0"></div>
<div class="a" style="left:588px;top:92.75px;width:1px;height:18.569999999999993px;background:#f0f0f0"></div>
<div class="a" style="left:0px;top:110.32px;width:607px;height:2px;background:#eeeeee"></div>
<div class="t s" style="left:3.3999999999999773px;top:95.95px;font-size:10.5px;font-weight:400;color:#000;transform:scaleX(0.914);">Отчет об исполнении бюджета</div>
<div class="t s" style="left:155px;top:95.95px;font-size:10.5px;font-weight:400;color:#000;transform:scaleX(0.914);">0503127</div>
<div class="t s" style="left:331px;top:95.95px;font-size:10.5px;font-weight:400;color:#000;transform:scaleX(0.914);">ПБС</div>
<div class="t s" style="left:462.79999999999995px;top:95.95px;font-size:10.5px;font-weight:400;color:#000;transform:scaleX(0.914);">01.07.2019</div>
<div class="t s" style="left:594px;top:95.95px;font-size:10.5px;font-weight:400;color:#000;transform:scaleX(0.914);">01.</div>
<div class="a" style="left:149px;top:111.32px;width:1px;height:18.569999999999993px;background:#f0f0f0"></div>
<div class="a" style="left:325px;top:111.32px;width:1px;height:18.569999999999993px;background:#f0f0f0"></div>
<div class="a" style="left:457px;top:111.32px;width:1px;height:18.569999999999993px;background:#f0f0f0"></div>
<div class="a" style="left:588px;top:111.32px;width:1px;height:18.569999999999993px;background:#f0f0f0"></div>
<div class="a" style="left:0px;top:128.89px;width:607px;height:2px;background:#eeeeee"></div>
<div class="t s" style="left:3.3999999999999773px;top:114.52px;font-size:10.5px;font-weight:400;color:#000;transform:scaleX(0.914);">Справка по заключению счет...</div>
<div class="t s" style="left:155px;top:114.52px;font-size:10.5px;font-weight:400;color:#000;transform:scaleX(0.914);">0503110</div>
<div class="t s" style="left:331px;top:114.52px;font-size:10.5px;font-weight:400;color:#000;transform:scaleX(0.914);">СУБЪЕКТ</div>
<div class="t s" style="left:462.79999999999995px;top:114.52px;font-size:10.5px;font-weight:400;color:#000;transform:scaleX(0.914);">01.10.2019</div>
<div class="t s" style="left:594px;top:114.52px;font-size:10.5px;font-weight:400;color:#000;transform:scaleX(0.914);">01.</div>
<div class="a" style="left:149px;top:129.89px;width:1px;height:18.569999999999993px;background:#f0f0f0"></div>
<div class="a" style="left:325px;top:129.89px;width:1px;height:18.569999999999993px;background:#f0f0f0"></div>
<div class="a" style="left:457px;top:129.89px;width:1px;height:18.569999999999993px;background:#f0f0f0"></div>
<div class="a" style="left:588px;top:129.89px;width:1px;height:18.569999999999993px;background:#f0f0f0"></div>
<div class="a" style="left:0px;top:147.46px;width:607px;height:2px;background:#eeeeee"></div>
<div class="t s" style="left:3.3999999999999773px;top:133.09px;font-size:10.5px;font-weight:400;color:#000;transform:scaleX(0.914);">Справка по заключению счет...</div>
<div class="t s" style="left:155px;top:133.09px;font-size:10.5px;font-weight:400;color:#000;transform:scaleX(0.914);">0503110</div>
<div class="t s" style="left:331px;top:133.09px;font-size:10.5px;font-weight:400;color:#000;transform:scaleX(0.914);">СУБЪЕКТ</div>
<div class="t s" style="left:462.79999999999995px;top:133.09px;font-size:10.5px;font-weight:400;color:#000;transform:scaleX(0.914);">01.06.2019</div>
<div class="t s" style="left:594px;top:133.09px;font-size:10.5px;font-weight:400;color:#000;transform:scaleX(0.914);">01.</div>
<div class="a" style="left:149px;top:148.46px;width:1px;height:18.569999999999993px;background:#f0f0f0"></div>
<div class="a" style="left:325px;top:148.46px;width:1px;height:18.569999999999993px;background:#f0f0f0"></div>
<div class="a" style="left:457px;top:148.46px;width:1px;height:18.569999999999993px;background:#f0f0f0"></div>
<div class="a" style="left:588px;top:148.46px;width:1px;height:18.569999999999993px;background:#f0f0f0"></div>
<div class="a" style="left:0px;top:166.03px;width:607px;height:2px;background:#eeeeee"></div>
<div class="t s" style="left:3.3999999999999773px;top:151.66px;font-size:10.5px;font-weight:400;color:#000;transform:scaleX(0.914);">Форма</div>
<div class="t s" style="left:155px;top:151.66px;font-size:10.5px;font-weight:400;color:#000;transform:scaleX(0.914);">3231</div>
<div class="t s" style="left:462.79999999999995px;top:151.66px;font-size:10.5px;font-weight:400;color:#000;transform:scaleX(0.914);">01.01.0001</div>
<div class="t s" style="left:594px;top:151.66px;font-size:10.5px;font-weight:400;color:#000;transform:scaleX(0.914);">31.</div>
<div class="a" style="left:149px;top:167.03px;width:1px;height:18.57000000000005px;background:#f0f0f0"></div>
<div class="a" style="left:325px;top:167.03px;width:1px;height:18.57000000000005px;background:#f0f0f0"></div>
<div class="a" style="left:457px;top:167.03px;width:1px;height:18.57000000000005px;background:#f0f0f0"></div>
<div class="a" style="left:588px;top:167.03px;width:1px;height:18.57000000000005px;background:#f0f0f0"></div>
<div class="a" style="left:0px;top:184.6px;width:607px;height:2px;background:#eeeeee"></div>
<div class="t s" style="left:3.3999999999999773px;top:170.23px;font-size:10.5px;font-weight:400;color:#000;transform:scaleX(0.914);">Сведения о движении нефин...</div>
<div class="t s" style="left:155px;top:170.23px;font-size:10.5px;font-weight:400;color:#000;transform:scaleX(0.914);">0503768</div>
<div class="t s" style="left:331px;top:170.23px;font-size:10.5px;font-weight:400;color:#000;transform:scaleX(0.914);">АиБ</div>
<div class="t s" style="left:462.79999999999995px;top:170.23px;font-size:10.5px;font-weight:400;color:#000;transform:scaleX(0.914);">01.02.2019</div>
<div class="t s" style="left:594px;top:170.23px;font-size:10.5px;font-weight:400;color:#000;transform:scaleX(0.914);">01.</div>
<div class="a" style="left:149px;top:185.6px;width:1px;height:18.569999999999993px;background:#f0f0f0"></div>
<div class="a" style="left:325px;top:185.6px;width:1px;height:18.569999999999993px;background:#f0f0f0"></div>
<div class="a" style="left:457px;top:185.6px;width:1px;height:18.569999999999993px;background:#f0f0f0"></div>
<div class="a" style="left:588px;top:185.6px;width:1px;height:18.569999999999993px;background:#f0f0f0"></div>
<div class="a" style="left:0px;top:203.17px;width:607px;height:2px;background:#eeeeee"></div>
<div class="t s" style="left:3.3999999999999773px;top:188.80px;font-size:10.5px;font-weight:400;color:#000;transform:scaleX(0.914);">ОТЧЕТ об обязательствах уч...</div>
<div class="t s" style="left:155px;top:188.80px;font-size:10.5px;font-weight:400;color:#000;transform:scaleX(0.914);">0503738</div>
<div class="t s" style="left:331px;top:188.80px;font-size:10.5px;font-weight:400;color:#000;transform:scaleX(0.914);">АиБ</div>
<div class="t s" style="left:462.79999999999995px;top:188.80px;font-size:10.5px;font-weight:400;color:#000;transform:scaleX(0.914);">01.07.2019</div>
<div class="t s" style="left:594px;top:188.80px;font-size:10.5px;font-weight:400;color:#000;transform:scaleX(0.914);">01.</div>
<div class="a" style="left:149px;top:204.17px;width:1px;height:18.569999999999993px;background:#f0f0f0"></div>
<div class="a" style="left:325px;top:204.17px;width:1px;height:18.569999999999993px;background:#f0f0f0"></div>
<div class="a" style="left:457px;top:204.17px;width:1px;height:18.569999999999993px;background:#f0f0f0"></div>
<div class="a" style="left:588px;top:204.17px;width:1px;height:18.569999999999993px;background:#f0f0f0"></div>
<div class="a" style="left:0px;top:221.74px;width:607px;height:2px;background:#eeeeee"></div>
<div class="t s" style="left:3.3999999999999773px;top:207.37px;font-size:10.5px;font-weight:400;color:#000;transform:scaleX(0.914);">Отчет о бюджетных обязател...</div>
<div class="t s" style="left:155px;top:207.37px;font-size:10.5px;font-weight:400;color:#000;transform:scaleX(0.914);">0503128</div>
<div class="t s" style="left:331px;top:207.37px;font-size:10.5px;font-weight:400;color:#000;transform:scaleX(0.914);">ПБС</div>
<div class="t s" style="left:462.79999999999995px;top:207.37px;font-size:10.5px;font-weight:400;color:#000;transform:scaleX(0.914);">01.02.2019</div>
<div class="t s" style="left:594px;top:207.37px;font-size:10.5px;font-weight:400;color:#000;transform:scaleX(0.914);">01.</div>
<div class="a" style="left:149px;top:222.74px;width:1px;height:18.569999999999993px;background:#f0f0f0"></div>
<div class="a" style="left:325px;top:222.74px;width:1px;height:18.569999999999993px;background:#f0f0f0"></div>
<div class="a" style="left:457px;top:222.74px;width:1px;height:18.569999999999993px;background:#f0f0f0"></div>
<div class="a" style="left:588px;top:222.74px;width:1px;height:18.569999999999993px;background:#f0f0f0"></div>
<div class="a" style="left:0px;top:240.31px;width:607px;height:2px;background:#eeeeee"></div>
<div class="t s" style="left:3.3999999999999773px;top:225.94px;font-size:10.5px;font-weight:400;color:#000;transform:scaleX(0.914);">Отчет о финансовых результ...</div>
<div class="t s" style="left:155px;top:225.94px;font-size:10.5px;font-weight:400;color:#000;transform:scaleX(0.914);">0503121</div>
<div class="t s" style="left:331px;top:225.94px;font-size:10.5px;font-weight:400;color:#000;transform:scaleX(0.914);">ПБС</div>
<div class="t s" style="left:462.79999999999995px;top:225.94px;font-size:10.5px;font-weight:400;color:#000;transform:scaleX(0.914);">01.06.2019</div>
<div class="t s" style="left:594px;top:225.94px;font-size:10.5px;font-weight:400;color:#000;transform:scaleX(0.914);">01.</div>
<div class="a" style="left:149px;top:241.31px;width:1px;height:18.569999999999993px;background:#f0f0f0"></div>
<div class="a" style="left:325px;top:241.31px;width:1px;height:18.569999999999993px;background:#f0f0f0"></div>
<div class="a" style="left:457px;top:241.31px;width:1px;height:18.569999999999993px;background:#f0f0f0"></div>
<div class="a" style="left:588px;top:241.31px;width:1px;height:18.569999999999993px;background:#f0f0f0"></div>
<div class="a" style="left:0px;top:258.88px;width:607px;height:2px;background:#eeeeee"></div>
<div class="t s" style="left:3.3999999999999773px;top:244.51px;font-size:10.5px;font-weight:400;color:#000;transform:scaleX(0.914);">Справка по консолидируемы...</div>
<div class="t s" style="left:155px;top:244.51px;font-size:10.5px;font-weight:400;color:#000;transform:scaleX(0.914);">0503125ПБС</div>
<div class="t s" style="left:331px;top:244.51px;font-size:10.5px;font-weight:400;color:#000;transform:scaleX(0.914);">ПБС</div>
<div class="t s" style="left:462.79999999999995px;top:244.51px;font-size:10.5px;font-weight:400;color:#000;transform:scaleX(0.914);">01.07.2019</div>
<div class="t s" style="left:594px;top:244.51px;font-size:10.5px;font-weight:400;color:#000;transform:scaleX(0.914);">01.</div>
<div class="a" style="left:149px;top:259.88px;width:1px;height:18.569999999999993px;background:#f0f0f0"></div>
<div class="a" style="left:325px;top:259.88px;width:1px;height:18.569999999999993px;background:#f0f0f0"></div>
<div class="a" style="left:457px;top:259.88px;width:1px;height:18.569999999999993px;background:#f0f0f0"></div>
<div class="a" style="left:588px;top:259.88px;width:1px;height:18.569999999999993px;background:#f0f0f0"></div>
<div class="a" style="left:0px;top:277.45px;width:607px;height:2px;background:#eeeeee"></div>
<div class="t s" style="left:3.3999999999999773px;top:263.08px;font-size:10.5px;font-weight:400;color:#000;transform:scaleX(0.914);">Баланс исполнения бюджета</div>
<div class="t s" style="left:155px;top:263.08px;font-size:10.5px;font-weight:400;color:#000;transform:scaleX(0.914);">0503130</div>
<div class="t s" style="left:331px;top:263.08px;font-size:10.5px;font-weight:400;color:#000;transform:scaleX(0.914);">ПБС</div>
<div class="t s" style="left:462.79999999999995px;top:263.08px;font-size:10.5px;font-weight:400;color:#000;transform:scaleX(0.914);">01.07.2019</div>
<div class="t s" style="left:594px;top:263.08px;font-size:10.5px;font-weight:400;color:#000;transform:scaleX(0.914);">01.</div>
<div class="a" style="left:149px;top:278.45px;width:1px;height:18.569999999999993px;background:#f0f0f0"></div>
<div class="a" style="left:325px;top:278.45px;width:1px;height:18.569999999999993px;background:#f0f0f0"></div>
<div class="a" style="left:457px;top:278.45px;width:1px;height:18.569999999999993px;background:#f0f0f0"></div>
<div class="a" style="left:588px;top:278.45px;width:1px;height:18.569999999999993px;background:#f0f0f0"></div>
<div class="a" style="left:0px;top:296.02px;width:607px;height:2px;background:#eeeeee"></div>
<div class="t s" style="left:3.3999999999999773px;top:281.65px;font-size:10.5px;font-weight:400;color:#000;transform:scaleX(0.914);">Отчет о финансовых результ...</div>
<div class="t s" style="left:155px;top:281.65px;font-size:10.5px;font-weight:400;color:#000;transform:scaleX(0.914);">0503721</div>
<div class="t s" style="left:331px;top:281.65px;font-size:10.5px;font-weight:400;color:#000;transform:scaleX(0.914);">АиБ</div>
<div class="t s" style="left:462.79999999999995px;top:281.65px;font-size:10.5px;font-weight:400;color:#000;transform:scaleX(0.914);">01.05.2019</div>
<div class="t s" style="left:594px;top:281.65px;font-size:10.5px;font-weight:400;color:#000;transform:scaleX(0.914);">01.</div>
</div>
<div class="a" style="left:963px;top:130px;width:8px;height:299px;background:#f6f6f6"></div>
<svg class="a" style="left:965px;top:134.5px" width="7" height="7"><path d="M0.8 5.6 L4.4 1.2 L8 5.6 Z" fill="#606060"/></svg>
<div class="a" style="left:965px;top:145px;width:6px;height:42px;background:#c1c1c1"></div>
<svg class="a" style="left:965px;top:417px" width="7" height="7"><path d="M0.8 1.2 L4.4 5.6 L8 1.2 Z" fill="#606060"/></svg>
<div class="a" style="left:356px;top:428px;width:607px;height:1px;background:#fff"></div>
<div class="a" style="left:356px;top:429px;width:607px;height:15px;background:#f0f0f0"></div>
<div class="a" style="left:356px;top:444px;width:615px;height:2px;background:#ececec"></div>
<svg class="a" style="left:361px;top:432px" width="5" height="7"><path d="M4.5 0.5 L0.5 3.5 L4.5 6.5 Z" fill="#a8a8a8"/></svg>
<div class="a" style="left:370.3px;top:431px;width:315.7px;height:11.2px;background:#c1c1c1"></div>
<svg class="a" style="left:954px;top:432px" width="5" height="7"><path d="M0.5 0.5 L4.5 3.5 L0.5 6.5 Z" fill="#333"/></svg>
<div class="a" style="left:963px;top:429px;width:8px;height:15px;background:#dcdcdc"></div>
<div class="a" style="left:356px;top:446px;width:615px;height:27px;background:linear-gradient(#f0f0f0,#e8e8e8);border-top:1px solid #d4d4d4;border-bottom:1px solid #d0d0d0"></div>
<div class="a" style="left:356px;top:447px;width:615px;height:1px;background:#fbfbfb"></div>
<svg class="a" style="left:364px;top:453px" width="10" height="12" viewBox="0 0 10 12"><rect x="0.4" y="0.5" width="2.2" height="10.5" rx="0.8" fill="#b8b8b8"/><path d="M8.8 1 V10.5 L3.6 5.75 Z" fill="#dcdcdc" stroke="#b4b4b4" stroke-width="1.1" stroke-linejoin="round"/></svg>
<svg class="a" style="left:384px;top:453px" width="8" height="12" viewBox="0 0 8 12"><path d="M6.8 1 V10.5 L1.4 5.75 Z" fill="#dcdcdc" stroke="#b4b4b4" stroke-width="1.1" stroke-linejoin="round"/></svg>
<div class="a" style="left:400.5px;top:453px;width:1px;height:11px;background:#d2cdc6;width:1.8px"></div>
<div class="t s" style="left:406.8px;top:453.30px;font-size:10.5px;font-weight:400;color:#000;transform:scaleX(0.9);">Страница</div>
<div class="a" style="left:453px;top:450px;width:33px;height:17px;background:linear-gradient(#eef2f5,#ffffff 40%);border:1px solid #c9c9c9"></div>
<div class="t s" style="left:477.6px;top:453.30px;font-size:10.5px;font-weight:400;color:#000;transform:scaleX(0.914);">1</div>
<div class="t s" style="left:488px;top:453.30px;font-size:10.5px;font-weight:400;color:#000;transform:scaleX(0.9);">из 9</div>
<div class="a" style="left:510.4px;top:453px;width:1px;height:11px;background:#d2cdc6;width:1.8px"></div>
<svg class="a" style="left:521px;top:453px" width="8" height="12" viewBox="0 0 8 12"><defs><linearGradient id="gN" x1="0" y1="0" x2="1" y2="1"><stop offset="0" stop-color="#9a9a9a"/><stop offset="1" stop-color="#4a4a4a"/></linearGradient></defs><path d="M1 0.5 V10.5 L6.8 5.5 Z" fill="url(#gN)"/></svg>
<svg class="a" style="left:539px;top:453px" width="11" height="12" viewBox="0 0 11 12"><path d="M1 0.5 V10.5 L6.8 5.5 Z" fill="url(#gN)"/><rect x="7.6" y="0.5" width="2.4" height="10.5" rx="0.6" fill="url(#gN)"/></svg>
<div class="a" style="left:557px;top:453px;width:1px;height:11px;background:#d2cdc6;width:1.8px"></div>
<svg class="a" style="left:565px;top:452px" width="14" height="14" viewBox="0 0 14 14"><path d="M1.9 7.2 A4.9 4.9 0 0 1 10.6 4.2" fill="none" stroke="#7a7a7a" stroke-width="2.9"/><path d="M1.9 7.2 A4.9 4.9 0 0 1 10.6 4.2" fill="none" stroke="#d8d8d8" stroke-width="1.1"/><path d="M12.9 0.6 V6.9 H6.6 Z" fill="#d8d8d8" stroke="#7a7a7a" stroke-width="0.9"/><path d="M11.6 6.4 A4.9 4.9 0 0 1 2.9 9.4" fill="none" stroke="#7a7a7a" stroke-width="2.9"/><path d="M11.6 6.4 A4.9 4.9 0 0 1 2.9 9.4" fill="none" stroke="#d8d8d8" stroke-width="1.1"/><path d="M0.6 12.9 V6.6 H6.9 Z" fill="#d8d8d8" stroke="#7a7a7a" stroke-width="0.9"/></svg>
<div class="t s" style="left:583px;top:453.30px;font-size:10.5px;font-weight:400;color:#000;transform:scaleX(0.916);">Строки 1 - 100 из 873</div>
<div class="a" style="left:355px;top:71.2px;width:474px;height:29px;border:2.1px solid #ef2f34;box-shadow:0.5px 2.4px 2.6px rgba(60,100,100,0.48), inset 0.5px 2.4px 2.6px rgba(60,100,100,0.45)"></div>
<svg class="a" style="left:820px;top:58px" width="60" height="30"><defs><filter id="sh" x="-20%" y="-50%" width="140%" height="200%"><feGaussianBlur stdDeviation="1"/></filter></defs><line x1="8.5" y1="25.5" x2="33.5" y2="15.5" stroke="rgba(70,110,110,0.4)" stroke-width="2.6" filter="url(#sh)"/><line x1="8" y1="23.8" x2="33.5" y2="13.6" stroke="#ef2f34" stroke-width="2.6"/><path d="M38.9 10.2 L42.3 7.2 V16.8" fill="none" stroke="rgba(70,110,110,0.3)" stroke-width="2.7" filter="url(#sh)"/><path d="M38.9 10 L42.3 7 V16.6" fill="none" stroke="#f03438" stroke-width="2.5" stroke-linejoin="round"/></svg>
</body></html>
